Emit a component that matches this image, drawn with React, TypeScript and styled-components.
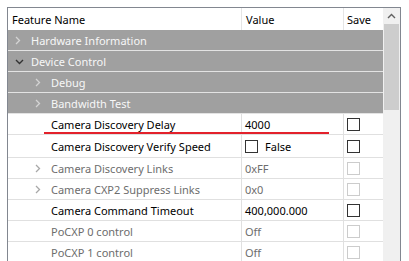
import React from "react";
import styled, { createGlobalStyle } from "styled-components";

type Feature =
  | { kind: "group"; name: string; level: number; open: boolean }
  | {
      kind: "item";
      name: string;
      level: number;
      value: string;
      bool?: boolean;
      disabled?: boolean;
      expandable?: boolean;
      tall?: boolean;
    };

const features: Feature[] = [
  { kind: "group", name: "Hardware Information", level: 0, open: false },
  { kind: "group", name: "Device Control", level: 0, open: true },
  { kind: "group", name: "Debug", level: 1, open: false },
  { kind: "group", name: "Bandwidth Test", level: 1, open: false },
  { kind: "item", name: "Camera Discovery Delay", level: 1, value: "4000" },
  { kind: "item", name: "Camera Discovery Verify Speed", level: 1, value: "False", bool: true, tall: true },
  { kind: "item", name: "Camera Discovery Links", level: 1, value: "0xFF", disabled: true, expandable: true },
  { kind: "item", name: "Camera CXP2 Suppress Links", level: 1, value: "0x0", disabled: true, expandable: true },
  { kind: "item", name: "Camera Command Timeout", level: 1, value: "400,000.000" },
  { kind: "item", name: "PoCXP 0 control", level: 1, value: "Off", disabled: true },
  { kind: "item", name: "PoCXP 1 control", level: 1, value: "Off", disabled: true },
];

const GlobalStyle = createGlobalStyle`
  html, body {
    margin: 0;
    padding: 0;
    background: #ffffff;
    overflow: hidden;
  }
  body {
    font-family: "Noto Sans", "Open Sans", sans-serif;
    font-size: 11px;
  }
`;

const Frame = styled.div`
  margin: 7px 0 0 7px;
  width: 394px;
  height: 270px;
  box-sizing: border-box;
  border: 1px solid #828790;
  border-bottom: none;
  display: flex;
  position: relative;
`;

const Table = styled.div`
  width: 375px;
  display: grid;
  grid-template-columns: 234px 102px 39px;
  grid-auto-rows: auto;
  align-content: start;
`;

const HeadCell = styled.div<{ $last?: boolean }>`
  height: 22px;
  box-sizing: border-box;
  padding-left: ${({ $last }) => ($last ? 3 : 4)}px;
  padding-top: 1px;
  display: flex;
  align-items: center;
  color: #000;
  border-right: ${({ $last }) => ($last ? "none" : "1px solid #e5e5e5")};
  background: #fff;
`;

const GroupRow = styled.div<{ $level: number }>`
  grid-column: 1 / -1;
  height: 21px;
  background: #a0a0a0;
  border-bottom: 1px solid #e3e3e3;
  box-sizing: border-box;
  display: flex;
  align-items: center;
  padding-left: ${({ $level }) => 7 + $level * 20}px;
  padding-top: 1px;
  color: #f7f7f7;
`;

const Cell = styled.div<{ $dim?: boolean; $tall?: boolean; $noLine?: boolean }>`
  box-sizing: border-box;
  height: ${({ $tall }) => ($tall ? 23 : 21)}px;
  border-bottom: 1px solid #e0e0e0;
  border-right: ${({ $noLine }) => ($noLine ? "none" : "1px solid #e0e0e0")};
  display: flex;
  align-items: center;
  padding-left: 3px;
  padding-top: 1px;
  color: ${({ $dim }) => ($dim ? "#6d6d6d" : "#000")};
  white-space: nowrap;
  overflow: hidden;
`;

const NameCell = styled(Cell)<{ $level: number }>`
  padding-left: ${({ $level }) => 7 + $level * 20}px;
`;

const Chevron = styled.span`
  width: 16px;
  height: 12px;
  flex: none;
  display: flex;
  align-items: center;
`;

const Box = styled.span<{ $dim?: boolean }>`
  width: 13px;
  height: 13px;
  box-sizing: border-box;
  border: 1px solid ${({ $dim }) => ($dim ? "#cccccc" : "#333333")};
  background: #fff;
  flex: none;
`;

const BoolText = styled.span`
  margin-left: 7px;
`;

const Marker = styled.div`
  position: absolute;
  left: 36px;
  top: 124px;
  width: 285px;
  height: 2px;
  background: #e3212b;
`;

const Scrollbar = styled.div`
  width: 17px;
  background: #f0f0f0;
  display: flex;
  flex-direction: column;
  align-items: center;
`;

const ArrowButton = styled.div`
  height: 16px;
  width: 17px;
  display: flex;
  align-items: center;
  justify-content: center;
`;

const Thumb = styled.div`
  width: 15px;
  height: 86px;
  background: #cdcdcd;
`;

const Right = ({ color }: { color: string }) => (
  <svg width="6" height="9" viewBox="0 0 6 9">
    <path d="M1 1 L4.5 4.5 L1 8" fill="none" stroke={color} strokeWidth="1.3" />
  </svg>
);

const Down = ({ color }: { color: string }) => (
  <svg width="9" height="6" viewBox="0 0 9 6">
    <path d="M1 1 L4.5 4.5 L8 1" fill="none" stroke={color} strokeWidth="1.4" />
  </svg>
);

const App = () => {
  return (
    <>
      <GlobalStyle />
      <Frame>
        <Table>
          <HeadCell>Feature Name</HeadCell>
          <HeadCell>Value</HeadCell>
          <HeadCell $last>Save</HeadCell>
          {features.map((f) =>
            f.kind === "group" ? (
              <GroupRow key={f.name} $level={f.level}>
                <Chevron>
                  {f.open ? <Down color="#333333" /> : <Right color="#d4d4d4" />}
                </Chevron>
                {f.name}
              </GroupRow>
            ) : (
              <React.Fragment key={f.name}>
                <NameCell $level={f.level} $dim={f.disabled} $tall={f.tall}>
                  <Chevron>{f.expandable && <Right color="#a8a8a8" />}</Chevron>
                  {f.name}
                </NameCell>
                <Cell $dim={f.disabled} $tall={f.tall}>
                  {f.bool ? (
                    <>
                      <Box />
                      <BoolText>{f.value}</BoolText>
                    </>
                  ) : (
                    f.value
                  )}
                </Cell>
                <Cell $tall={f.tall} $noLine>
                  <Box $dim={f.disabled} />
                </Cell>
              </React.Fragment>
            )
          )}
        </Table>
        <Scrollbar>
          <ArrowButton>
            <svg width="9" height="6" viewBox="0 0 9 6">
              <path d="M1 5 L4.5 1.5 L8 5" fill="none" stroke="#606060" strokeWidth="1.4" />
            </svg>
          </ArrowButton>
          <Thumb />
        </Scrollbar>
        <Marker />
      </Frame>
    </>
  );
};

export default App;
